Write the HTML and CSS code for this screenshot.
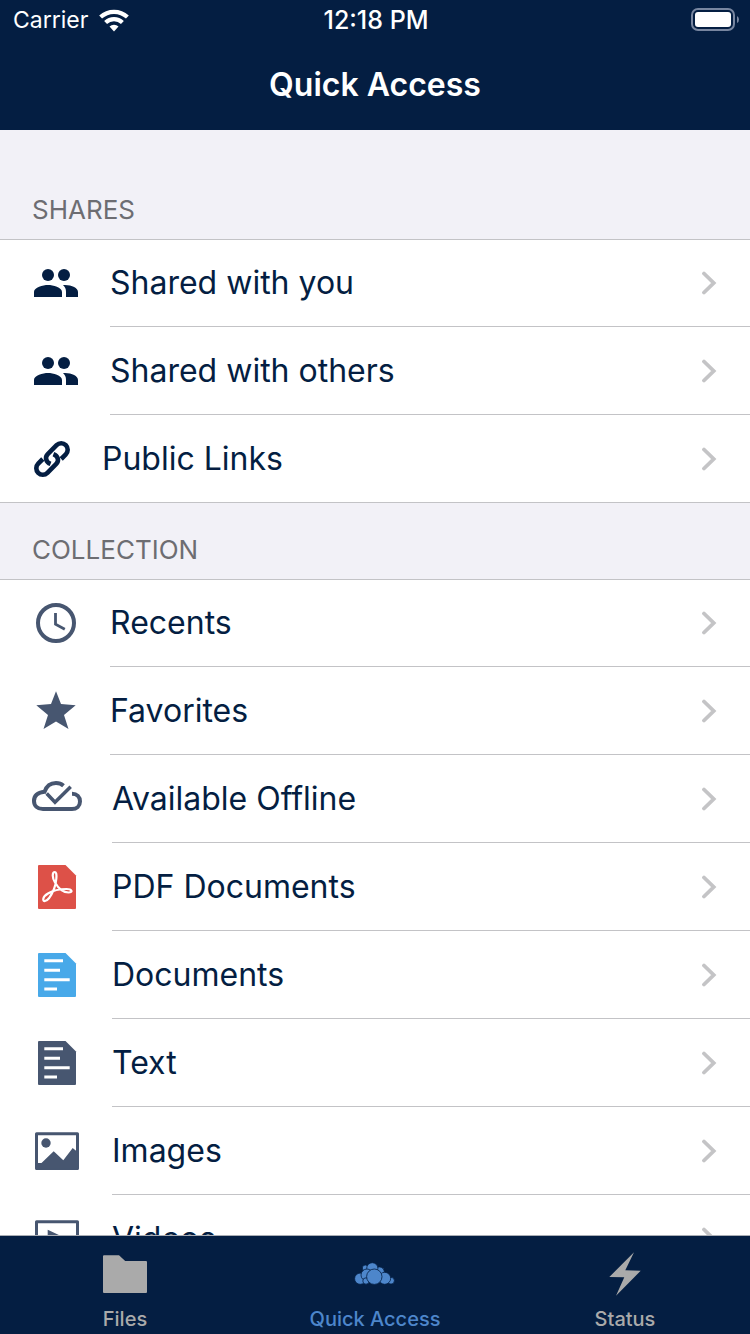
FILE: index.html
```html
<!DOCTYPE html>
<html lang="en">
<head>
<meta charset="utf-8">
<meta name="viewport" content="width=device-width, initial-scale=1">
<title>Quick Access</title>
<link rel="stylesheet" href="styles.css">
</head>
<body>
<svg class="defs" aria-hidden="true">
  <symbol id="people" viewBox="0 0 48 48"><circle cx="16" cy="16" r="6"/><circle cx="32" cy="16" r="6"/><path d="M2 38v-5c0-4.700 9-7 14-7s14 2.300 14 7v5zM31 26.100c8-.6 15 2.600 15 6.900v5H34v-5c0-3-1-5-3-6.900z"/></symbol>
  <symbol id="chevron" viewBox="0 0 16 24"><path d="M3 2.500l9.700 9.500L3 21.500" fill="none" stroke="currentColor" stroke-width="3.800" stroke-linecap="round" stroke-linejoin="miter"/></symbol>
  <symbol id="page" viewBox="0 0 50 48"><path d="M7 2H33.500L44 12.500V45q0 1-1 1H7q-1 0-1-1V3q0-1 1-1z"/></symbol>
  <symbol id="lines" viewBox="0 0 50 48"><path d="M12.300 9.700H31M12.300 19.300H28M12.300 28.700H37.700M12.300 38H25" stroke="#fff" stroke-width="3"/></symbol>
</svg>

<header class="top">
  <div class="status">
    <div class="status-left">
      <span>Carrier</span>
      <svg class="wifi" viewBox="0 0 30 24"><path d="M15 23.500L10.500 18.600A6.700 6.700 0 0 1 19.500 18.600z" fill="currentColor"/><path d="M6.600 14.400A12.200 12.200 0 0 1 23.400 14.400M1.600 9A19.800 19.800 0 0 1 28.400 9" fill="none" stroke="currentColor" stroke-width="4.200"/></svg>
    </div>
    <span class="time">12:18 PM</span>
    <svg class="battery" viewBox="0 0 48 24"><rect x="1" y="1" width="42" height="21" rx="6" fill="none" stroke="#7886a0" stroke-width="2"/><rect x="4" y="4" width="36" height="15" rx="3" fill="#fff"/><path d="M46 8q2 1 2 3.500T46 15z" fill="#7886a0"/></svg>
  </div>
  <h1 class="title">Quick Access</h1>
</header>

<main class="content">
  <section>
    <h2 class="heading heading-first">Shares</h2>
    <ul class="list list-closed">
      <li><a class="row" href="#"><svg class="icon navy" viewBox="0 0 48 48"><use href="#people"/></svg><span class="cell">Shared with you<svg class="chevron"><use href="#chevron"/></svg></span></a></li>
      <li><a class="row" href="#"><svg class="icon navy" viewBox="0 0 48 48"><use href="#people"/></svg><span class="cell">Shared with others<svg class="chevron"><use href="#chevron"/></svg></span></a></li>
      <li><a class="row" href="#"><svg class="icon icon-narrow navy" viewBox="0 0 40 48"><g transform="rotate(-45 20 24)" fill="none" stroke="currentColor" stroke-width="4.600"><path d="M26.500 30.500H33a6.500 6.500 0 0 0 0-13H20.500c-4.500 0-7 4.500-5 9"/><path d="M13.500 17.500H7a6.500 6.500 0 0 0 0 13H19.500c4.500 0 7-4.500 5-9"/></g></svg><span class="cell">Public Links<svg class="chevron"><use href="#chevron"/></svg></span></a></li>
    </ul>
  </section>
  <section>
    <h2 class="heading">Collection</h2>
    <ul class="list">
      <li><a class="row" href="#"><svg class="icon slate" viewBox="0 0 48 48"><circle cx="24" cy="24" r="18" fill="none" stroke="currentColor" stroke-width="4"/><path d="M23.500 14v11.200l9.300 5" fill="none" stroke="currentColor" stroke-width="2.800"/></svg><span class="cell">Recents<svg class="chevron"><use href="#chevron"/></svg></span></a></li>
      <li><a class="row" href="#"><svg class="icon slate" viewBox="0 0 48 48"><path d="M24 4.300l5 12.600 14.700 1.400L32 28l4.500 14L24 34.600 11.500 42 16 28 4.300 18.300 19 16.900z"/></svg><span class="cell">Favorites<svg class="chevron"><use href="#chevron"/></svg></span></a></li>
      <li><a class="row" href="#"><svg class="icon icon-wide slate" viewBox="0 0 50 48"><g fill="none" stroke="currentColor" stroke-width="4"><path d="M40 18.800c5 0 8 3.200 8 7.700s-3.500 7.500-8 7.500H11C5.500 34 2 30.500 2 26c0-5 3.500-8.500 10.500-9.200C14.500 11 19 8 24 8q4.500 0 7.500 2.700"/><path d="M14.700 18.500l8.300 8.700L38.700 11.700" stroke-width="3.500"/></g></svg><span class="cell">Available Offline<svg class="chevron"><use href="#chevron"/></svg></span></a></li>
      <li><a class="row" href="#"><svg class="icon icon-wide red" viewBox="0 0 50 48"><use href="#page"/><path d="M23 9c-3 0-3 5.500 0 10.500 3.500 6 8.500 10 13.500 10 5 0 3.500-3.500-2-3.500-7 0-13.500 1.500-18.500 4.500-6 3.500-5.500 8-3 7.500 3-.5 6.500-6 9-12s3.500-17 1-17z" fill="none" stroke="#fff" stroke-width="2.200"/></svg><span class="cell">PDF Documents<svg class="chevron"><use href="#chevron"/></svg></span></a></li>
      <li><a class="row" href="#"><svg class="icon icon-wide blue" viewBox="0 0 50 48"><use href="#page"/><use href="#lines"/></svg><span class="cell">Documents<svg class="chevron"><use href="#chevron"/></svg></span></a></li>
      <li><a class="row" href="#"><svg class="icon icon-wide slate" viewBox="0 0 50 48"><use href="#page"/><use href="#lines"/></svg><span class="cell">Text<svg class="chevron"><use href="#chevron"/></svg></span></a></li>
      <li><a class="row" href="#"><svg class="icon icon-wide slate" viewBox="0 0 50 48"><rect x="4.500" y="6.800" width="41" height="34.700" fill="none" stroke="currentColor" stroke-width="3" stroke-linejoin="round"/><circle cx="14" cy="16" r="4.700"/><path d="M4.500 36h5l12.200-11.700 9.600 9L40.700 21l4.800 4v16.500h-41z"/></svg><span class="cell">Images<svg class="chevron"><use href="#chevron"/></svg></span></a></li>
      <li><a class="row" href="#"><svg class="icon icon-wide slate" viewBox="0 0 50 48"><rect x="4.500" y="6.800" width="41" height="34.700" fill="none" stroke="currentColor" stroke-width="3" stroke-linejoin="round"/><path d="M15.700 14.700L36 24.300 15.700 34z"/></svg><span class="cell">Videos<svg class="chevron"><use href="#chevron"/></svg></span></a></li>
    </ul>
  </section>
</main>

<nav class="tabs">
  <a class="tab" href="#"><svg class="tab-icon" viewBox="0 0 48 48"><path d="M3 5.300h15l6.200 5.800H45q1 0 1 1V42q0 1-1 1H3q-1 0-1-1V6.300q0-1 1-1z"/></svg>Files</a>
  <a class="tab tab-active" href="#" aria-current="page"><svg class="tab-icon" viewBox="0 0 48 48"><g stroke="#041e42" stroke-width="0.800"><circle cx="14.300" cy="18" r="3"/><circle cx="28.300" cy="21.900" r="5"/><circle cx="21.300" cy="18.300" r="5.600"/><circle cx="9.200" cy="28.700" r="5.600"/><circle cx="16" cy="25" r="6"/><circle cx="15" cy="31" r="3.200"/><circle cx="40" cy="30.700" r="3.400"/><circle cx="33.700" cy="28.300" r="6"/><circle cx="23.300" cy="26.700" r="7.700"/></g></svg>Quick Access</a>
  <a class="tab" href="#"><svg class="tab-icon" viewBox="0 0 48 48"><path d="M33 2.300L24.300 20.300l15.400.4L15 45.700l8.300-18.400L8.300 27z"/></svg>Status</a>
</nav>
</body>
</html>
```
FILE: styles.css
```css
* { box-sizing: border-box; }

body {
  display: flex;
  flex-direction: column;
  height: 100vh;
  margin: 0;
  background: #f2f1f7;
  color: #041e42;
  font-family: Inter, "Liberation Sans", sans-serif;
}

a { color: inherit; text-decoration: none; }
svg { display: block; flex: none; fill: currentColor; }
.defs { position: absolute; width: 0; height: 0; }

.top {
  flex: none;
  padding-bottom: 22px;
  background: #041e42;
  color: #fff;
}
.status {
  display: grid;
  grid-template-columns: 1fr auto 1fr;
  align-items: center;
  height: 40px;
  padding: 0 11px 0 13px;
  font-size: 23px;
}
.status-left { display: flex; align-items: center; gap: 11px; }
.wifi { width: 30px; height: 24px; }
.time { font-size: 25px; font-weight: 500; }
.battery { width: 48px; height: 24px; justify-self: end; }
.title {
  margin: 0;
  padding-top: 22px;
  font-size: 32px;
  line-height: 46px;
  font-weight: 600;
  text-align: center;
}

.content {
  flex: 1;
  min-height: 0;
  overflow-y: auto;
  scrollbar-width: none;
}
.heading {
  margin: 0;
  padding: 30px 32px 12px;
  color: #6d6d72;
  font-size: 26px;
  line-height: 34px;
  font-weight: 400;
  text-transform: uppercase;
}
.heading-first { padding-top: 63px; }

.list {
  margin: 0;
  padding: 0;
  list-style: none;
  background: #fff;
  box-shadow: inset 0 1px #c3c3c6;
}
.list-closed { box-shadow: inset 0 1px #c3c3c6, inset 0 -1px #c3c3c6; }
.row {
  display: flex;
  align-items: center;
  gap: 30px;
  padding-left: 32px;
}
.cell {
  display: flex;
  flex: 1;
  align-items: center;
  justify-content: space-between;
  min-height: 88px;
  padding-right: 33px;
  border-bottom: 1px solid #c3c3c6;
  font-size: 32px;
}
.icon { width: 48px; height: 48px; }
.icon-narrow { width: 40px; }
.icon-wide { width: 50px; }
.chevron { width: 16px; height: 24px; color: #c4c4c6; }

.navy { color: #041e42; }
.slate { color: #475670; }
.red { color: #dd5148; }
.blue { color: #48a9e9; }

.tabs {
  display: grid;
  grid-template-columns: repeat(3, 1fr);
  flex: none;
  border-top: 1px solid #a9adb4;
  background: #041e42;
  color: #aaa;
}
.tab {
  display: flex;
  flex-direction: column;
  align-items: center;
  gap: 8px;
  padding: 14px 0 2px;
  font-size: 20px;
  line-height: 26px;
  font-weight: 500;
}
.tab-icon { width: 48px; height: 48px; }
.tab-active { color: #4d86cb; }
```
